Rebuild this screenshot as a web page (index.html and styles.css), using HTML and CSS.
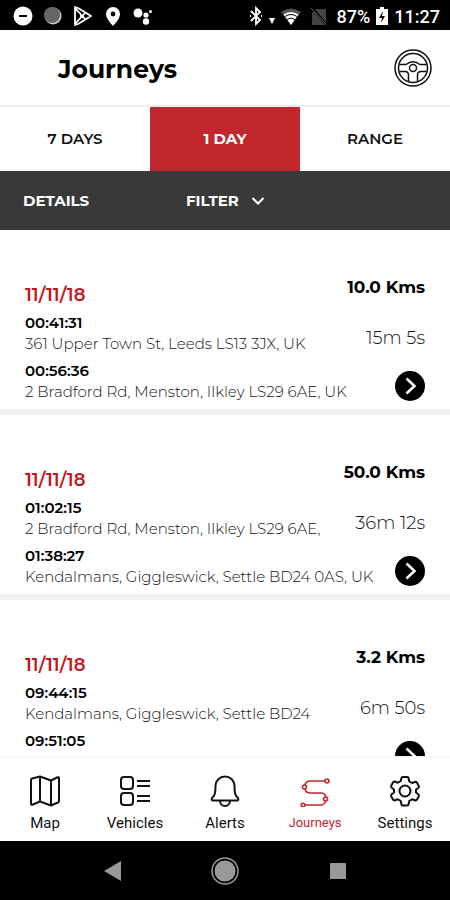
FILE: index.html
```html
<!DOCTYPE html>
<html lang="en">
<head>
    <meta charset="UTF-8">
    <meta name="viewport" content="width=device-width, initial-scale=1.0">
    <title>Journeys</title>
    <link rel="stylesheet" href="styles.css">
</head>
<body>

    <!-- Status bar -->
    <div class="status-bar">
        <div class="status-left">
            <svg width="20" height="20" viewBox="0 0 20 20"><circle cx="10" cy="10" r="9.5" fill="#fff"/><path d="M6 10h8" stroke="#000" stroke-width="2"/></svg>
            <svg width="20" height="20" viewBox="0 0 20 20"><circle cx="10" cy="10" r="8.5" fill="#ccc"/><circle cx="9" cy="9" r="8" fill="#666"/></svg>
            <svg width="20" height="20" viewBox="0 0 20 20" fill="none" stroke="#fff" stroke-width="1.8" stroke-linejoin="round"><path d="M2 1v18l3-1 13-8L5 2zM2 2l10 11M2 18L12 7M7 10h4"/></svg>
            <svg width="20" height="20" viewBox="0 0 20 20"><path d="M10 1a7 7 0 0 0-7 7c0 5 7 12 7 12s7-7 7-12a7 7 0 0 0-7-7z" fill="#fff"/><circle cx="10" cy="8" r="2.4"/></svg>
            <svg width="20" height="20" viewBox="0 0 20 20" fill="#fff"><circle cx="5" cy="7" r="4.5"/><circle cx="13" cy="9" r="2.6"/><circle cx="13" cy="15.5" r="3.2"/><circle cx="17.5" cy="5.5" r="1.5"/></svg>
        </div>
        <div class="status-right">
            <svg width="14" height="20" viewBox="0 0 14 20" fill="none" stroke="#fff" stroke-width="1.8"><path d="M2 5l9 9-4 4V2l4 4-9 9M1 10h1M12 10h1"/></svg>
            <svg width="6" height="20" viewBox="0 0 6 20" fill="#fff"><path d="M0 12h6l-3 6z"/></svg>
            <svg width="20" height="20" viewBox="0 0 20 20"><path d="M0 6Q10-1 20 6L10 19z" fill="#555"/><path d="M2.5 8.5Q10 3.5 17.5 8.5L10 19z" fill="#fff"/><path d="M4 10.5q6-4 12 0M6 13.5q4-3 8 0" stroke="#000" fill="none"/></svg>
            <svg class="sim" width="16" height="18" viewBox="0 0 16 18"><path d="M5 2h10v16H1V6z" fill="#444"/><path d="M1 1l14 16" stroke="#000" stroke-width="2.5"/><path d="M0 1l15 16" stroke="#666"/></svg>
            <span class="battery-level">87%</span>
            <svg width="12" height="20" viewBox="0 0 12 20"><path d="M4 1h4v2h4v16H0V3h4z" fill="#fff"/><path d="M7 5l-4 7h3l-1 5 4-7H6z"/></svg>
            <span class="clock">11:27</span>
        </div>
    </div>

    <header class="header">
        <h1>Journeys</h1>
        <button type="button" class="wheel-button" aria-label="Driver">
            <svg width="38" height="38" viewBox="0 0 38 38" fill="none" stroke="#111" stroke-width="1.5">
                <circle cx="19" cy="19" r="18"/>
                <circle cx="19" cy="19" r="14.5"/>
                <circle cx="19" cy="19" r="3.5"/>
                <path d="M5.5 15.5H12Q19 10 26 15.5h6.5M5.5 22.5H11q3.5 0 3.5 3.5v7M32.5 22.5H27q-3.5 0-3.5 3.5v7"/>
            </svg>
        </button>
    </header>

    <!-- Period tabs -->
    <div class="tabs">
        <button type="button" class="tab">7 DAYS</button>
        <button type="button" class="tab active">1 DAY</button>
        <button type="button" class="tab">RANGE</button>
    </div>

    <div class="toolbar">
        <button type="button" class="toolbar-button">DETAILS</button>
        <button type="button" class="toolbar-button">
            FILTER
            <svg width="14" height="10" viewBox="0 0 14 10" fill="none" stroke="#fff" stroke-width="2"><path d="M1.5 2L7 7.5 12.5 2"/></svg>
        </button>
    </div>

    <main class="journeys">
        <article class="journey">
            <div class="journey-info">
                <h2>11/11/18</h2>
                <div class="stop">
                    <time>00:41:31</time>
                    <p>361 Upper Town St, Leeds LS13 3JX, UK</p>
                </div>
                <div class="stop">
                    <time>00:56:36</time>
                    <p>2 Bradford Rd, Menston, Ilkley LS29 6AE, UK</p>
                </div>
            </div>
            <div class="journey-stats">
                <span class="distance">10.0 Kms</span>
                <span class="duration">15m 5s</span>
                <button type="button" class="open-button" aria-label="Open journey">
                    <svg width="30" height="30" viewBox="0 0 30 30" fill="none" stroke="#fff" stroke-width="2.5"><path d="M11.5 7.5L19.5 15l-8 7.5"/></svg>
                </button>
            </div>
        </article>

        <article class="journey">
            <div class="journey-info">
                <h2>11/11/18</h2>
                <div class="stop">
                    <time>01:02:15</time>
                    <p>2 Bradford Rd, Menston, Ilkley LS29 6AE,</p>
                </div>
                <div class="stop">
                    <time>01:38:27</time>
                    <p>Kendalmans, Giggleswick, Settle BD24 0AS, UK</p>
                </div>
            </div>
            <div class="journey-stats">
                <span class="distance">50.0 Kms</span>
                <span class="duration">36m 12s</span>
                <button type="button" class="open-button" aria-label="Open journey">
                    <svg width="30" height="30" viewBox="0 0 30 30" fill="none" stroke="#fff" stroke-width="2.5"><path d="M11.5 7.5L19.5 15l-8 7.5"/></svg>
                </button>
            </div>
        </article>

        <article class="journey">
            <div class="journey-info">
                <h2>11/11/18</h2>
                <div class="stop">
                    <time>09:44:15</time>
                    <p>Kendalmans, Giggleswick, Settle BD24</p>
                </div>
                <div class="stop">
                    <time>09:51:05</time>
                    <p>Whitefields, Giggleswick, Settle BD24 0AS, UK</p>
                </div>
            </div>
            <div class="journey-stats">
                <span class="distance">3.2 Kms</span>
                <span class="duration">6m 50s</span>
                <button type="button" class="open-button" aria-label="Open journey">
                    <svg width="30" height="30" viewBox="0 0 30 30" fill="none" stroke="#fff" stroke-width="2.5"><path d="M11.5 7.5L19.5 15l-8 7.5"/></svg>
                </button>
            </div>
        </article>
    </main>

    <!-- Bottom navigation -->
    <nav class="bottom-nav">
        <a href="#map" class="nav-item">
            <svg width="32" height="32" viewBox="0 0 32 32" fill="none" stroke="#111" stroke-width="2" stroke-linejoin="round"><path d="M2 5q0-1 1-1.5L11 1.5l11 4 6-3q2-1 2 1V26q0 1-1 1.5l-7 3-11-4-7 3q-2 1-2-1zM11 1.5v25M22 5.5v25"/></svg>
            <span>Map</span>
        </a>
        <a href="#vehicles" class="nav-item">
            <svg width="32" height="32" viewBox="0 0 32 32" fill="none" stroke="#111" stroke-width="2"><rect x="2" y="2" width="12" height="12" rx="3"/><rect x="2" y="18" width="12" height="12" rx="3"/><path d="M18 6h13M18 11h13M18 21h13M18 26h13"/></svg>
            <span>Vehicles</span>
        </a>
        <a href="#alerts" class="nav-item">
            <svg width="32" height="32" viewBox="0 0 32 32" fill="none" stroke="#111" stroke-width="2" stroke-linejoin="round"><path d="M16 1.5a9.5 9.5 0 0 0-9.5 9.5c0 8-1 9.5-3.5 12-1 1.5 0 2.5 1 2.5h24c1 0 2-1 1-2.5-2.5-2.5-3.5-4-3.5-12A9.5 9.5 0 0 0 16 1.5zM11 26a5 5 0 0 0 10 0"/></svg>
            <span>Alerts</span>
        </a>
        <a href="#journeys" class="nav-item current">
            <svg width="32" height="32" viewBox="0 0 32 32" fill="none" stroke="#c1272d" stroke-width="1.6"><path d="M26 6H11q-4 0-5 4M6 14q1 4 5 4h11q4 0 5 4M27 26q-2 4-5 4H6"/><circle cx="28" cy="6" r="2"/><circle cx="5.5" cy="12" r="2"/><circle cx="26.5" cy="24" r="2"/><circle cx="4" cy="30" r="1.8"/></svg>
            <span>Journeys</span>
        </a>
        <a href="#settings" class="nav-item">
            <svg width="32" height="32" viewBox="0 0 32 32" fill="none" stroke="#111" stroke-width="2" stroke-linejoin="round"><path d="M14 2h4q1.500 0 1.700 1.500l.5 2.800 3 1.700 2.700-1q1.400-.5 2.100.8l1.700 3q.7 1.300-.4 2.200L27 14.500v3l2.300 1.800q1.100.9.400 2.200l-1.700 3q-.7 1.300-2.100.8l-2.700-1-3 1.700-.5 2.800Q19.500 30.500 18 30.500h-4q-1.500 0-1.700-1.700l-.5-2.800-3-1.700-2.700 1q-1.400.5-2.100-.8l-1.700-3q-.7-1.300.4-2.200L5 17.500v-3l-2.300-1.800q-1.100-.9-.4-2.200l1.700-3q.7-1.300 2.100-.8l2.700 1 3-1.700.5-2.500Q12.500 2 14 2z"/><circle cx="16" cy="16" r="5.5"/></svg>
            <span>Settings</span>
        </a>
    </nav>

    <div class="system-nav">
        <button type="button" aria-label="Back"><svg width="28" height="28" viewBox="0 0 28 28"><path d="M5 14L22 4v20z" fill="#999"/></svg></button>
        <button type="button" aria-label="Home"><svg width="28" height="28" viewBox="0 0 28 28"><circle cx="14" cy="14" r="13" fill="none" stroke="#999" stroke-width="1.5"/><circle cx="14" cy="14" r="10.5" fill="#999"/></svg></button>
        <button type="button" aria-label="Recent apps"><svg width="28" height="28" viewBox="0 0 28 28"><rect x="6" y="6" width="16" height="16" rx="1" fill="#999"/></svg></button>
    </div>

</body>
</html>
```
FILE: styles.css
```css
/* General styling */
* {
    box-sizing: border-box;
}

body {
    font-family: 'Montserrat', 'Inter', sans-serif;
    margin: 0;
    height: 100vh;
    display: flex;
    flex-direction: column;
    background-color: #fff;
    color: #000;
}

h1,
h2,
p {
    margin: 0;
}

button {
    font-family: inherit;
    border: none;
    padding: 0;
    background: none;
    cursor: pointer;
}

svg {
    display: block;
}

/* Status bar */
.status-bar {
    flex: none;
    display: flex;
    justify-content: space-between;
    align-items: center;
    height: 30px;
    padding: 2px 10px 0 13px;
    background-color: #000;
    color: #fff;
    font-family: 'Roboto', sans-serif;
    font-size: 18px;
    font-weight: 500;
}

.status-left {
    display: flex;
    gap: 10px;
}

.status-right {
    display: flex;
    align-items: center;
    gap: 6px;
}

.status-right .sim {
    margin: 0 4px;
}

/* Header */
.header {
    flex: none;
    display: flex;
    justify-content: space-between;
    align-items: center;
    height: 77px;
    padding: 0 18px 0 58px;
    border-bottom: 2px solid #eee;
}

.header h1 {
    padding-top: 2px;
    font-size: 25px;
    font-weight: 700;
}

/* Tabs */
.tabs {
    flex: none;
    display: flex;
    height: 64px;
}

.tab {
    flex: 1;
    padding-bottom: 2px;
    font-size: 15px;
    font-weight: 600;
    color: #111;
}

.tab.active {
    background-color: #c1272d;
    color: #fff;
    font-weight: 700;
}

.toolbar {
    flex: none;
    display: grid;
    grid-template-columns: 163px 1fr;
    justify-items: start;
    height: 59px;
    padding: 0 23px;
    background-color: #393939;
}

.toolbar-button {
    display: flex;
    align-items: center;
    gap: 12px;
    color: #fff;
    font-size: 15px;
    font-weight: 700;
}

/* Journey list */
.journeys {
    flex: 1;
    min-height: 0;
    overflow-y: auto;
    scrollbar-width: none;
}

.journey {
    display: flex;
    padding: 45px 25px 6px;
    border-bottom: 6px solid #f1f1f1;
}

/* long addresses may run under the stats column */
.journey-info {
    flex: 1;
    min-width: 0;
    padding-top: 9px;
    white-space: nowrap;
}

.journey-info h2 {
    font-size: 18px;
    font-weight: 600;
    line-height: 23px;
    color: #c4161c;
}

.stop {
    margin-top: 6px;
}

.stop time {
    display: block;
    font-size: 15px;
    font-weight: 600;
    line-height: 20px;
}

.stop p {
    font-size: 15px;
    font-weight: 300;
    line-height: 22px;
    color: #111;
}

.journey-stats {
    display: flex;
    flex-direction: column;
    align-items: flex-end;
    white-space: nowrap;
    line-height: 24px;
}

.distance {
    font-size: 17px;
    font-weight: 700;
}

.duration {
    margin-top: 27px;
    font-size: 18px;
    font-weight: 300;
    color: #111;
}

.open-button {
    margin-top: 21px;
    border-radius: 50%;
    background-color: #000;
}

/* Bottom navigation */
.bottom-nav {
    flex: none;
    display: flex;
    height: 85px;
    border-top: 2px solid #f6f6f6;
    background-color: #fff;
}

.nav-item {
    flex: 1;
    display: flex;
    flex-direction: column;
    align-items: center;
    gap: 6px;
    padding-top: 17px;
    font-family: 'Roboto', sans-serif;
    font-size: 15px;
    line-height: 20px;
    color: #111;
    text-decoration: none;
}

.nav-item.current {
    font-size: 13px;
    color: #c1272d;
}

.system-nav {
    flex: none;
    display: flex;
    justify-content: space-around;
    align-items: center;
    height: 59px;
    padding: 0 12.5%;
    background-color: #000;
}
```
